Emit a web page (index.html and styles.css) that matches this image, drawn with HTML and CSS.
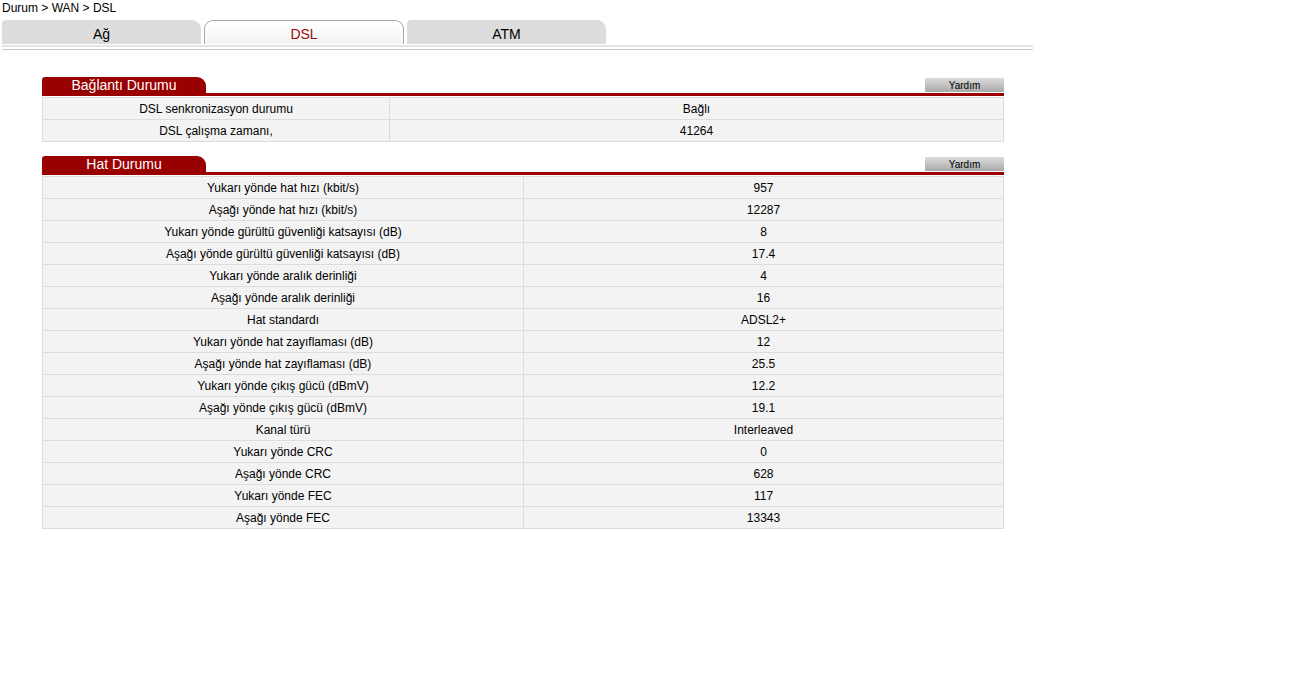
FILE: index.html
```html
<!DOCTYPE html>
<html>
<head>
<meta charset="utf-8">
<link rel="stylesheet" href="styles.css">
</head>
<body>
<div class="crumb">Durum &gt; WAN &gt; DSL</div>
<div class="tabbar">
  <div class="tab">Ağ</div>
  <div class="tab active">DSL</div>
  <div class="tab">ATM</div>
</div>
<div class="content">
  <div class="section">
    <div class="sec-head">
      <div class="sec-title">Bağlantı Durumu</div>
      <div class="help">Yardım</div>
    </div>
    <table class="grid first">
      <tr><td class="k">DSL senkronizasyon durumu</td><td>Bağlı</td></tr>
      <tr><td class="k">DSL çalışma zamanı,</td><td>41264</td></tr>
    </table>
  </div>
  <div class="section">
    <div class="sec-head">
      <div class="sec-title">Hat Durumu</div>
      <div class="help">Yardım</div>
    </div>
    <table class="grid second">
      <tr><td class="k">Yukarı yönde hat hızı (kbit/s)</td><td>957</td></tr>
      <tr><td class="k">Aşağı yönde hat hızı (kbit/s)</td><td>12287</td></tr>
      <tr><td class="k">Yukarı yönde gürültü güvenliği katsayısı (dB)</td><td>8</td></tr>
      <tr><td class="k">Aşağı yönde gürültü güvenliği katsayısı (dB)</td><td>17.4</td></tr>
      <tr><td class="k">Yukarı yönde aralık derinliği</td><td>4</td></tr>
      <tr><td class="k">Aşağı yönde aralık derinliği</td><td>16</td></tr>
      <tr><td class="k">Hat standardı</td><td>ADSL2+</td></tr>
      <tr><td class="k">Yukarı yönde hat zayıflaması (dB)</td><td>12</td></tr>
      <tr><td class="k">Aşağı yönde hat zayıflaması (dB)</td><td>25.5</td></tr>
      <tr><td class="k">Yukarı yönde çıkış gücü (dBmV)</td><td>12.2</td></tr>
      <tr><td class="k">Aşağı yönde çıkış gücü (dBmV)</td><td>19.1</td></tr>
      <tr><td class="k">Kanal türü</td><td>Interleaved</td></tr>
      <tr><td class="k">Yukarı yönde CRC</td><td>0</td></tr>
      <tr><td class="k">Aşağı yönde CRC</td><td>628</td></tr>
      <tr><td class="k">Yukarı yönde FEC</td><td>117</td></tr>
      <tr><td class="k">Aşağı yönde FEC</td><td>13343</td></tr>
    </table>
  </div>
</div>
</body>
</html>
```
FILE: styles.css
```css
html, body {
  margin: 0;
  padding: 0;
  background: #fff;
  font-family: "Liberation Sans", Arial, sans-serif;
  color: #000;
}
.crumb {
  font-size: 12px;
  line-height: 14px;
  padding-left: 2px;
  padding-top: 1px;
  height: 19px;
}
.tabbar {
  display: flex;
  gap: 3px;
  width: 1031px;
  margin-left: 2px;
  border-bottom: 2px solid #e4e4e4;
  box-shadow: 0 2px 0 #fff, 0 3px 0 #c8c8c8;
  padding-bottom: 1px;
}
.tab {
  width: 199px;
  height: 24px;
  line-height: 29px;
  text-align: center;
  font-size: 14px;
  background: #dcdcdc;
  border-radius: 4px 9px 0 0;
  box-sizing: border-box;
}
.tab.active {
  background: linear-gradient(#ffffff, #f4f4f4);
  border: 1px solid #a8a8a8;
  border-bottom: none;
  border-radius: 9px 9px 0 0;
  color: #9b0a0a;
  line-height: 27px;
  width: 200px;
}
.content {
  margin-left: 42px;
  width: 962px;
  padding-top: 30px;
}
.section {
  margin-bottom: 14px;
}
.sec-head {
  display: flex;
  justify-content: space-between;
  align-items: flex-end;
  border-bottom: 3px solid #990000;
  height: 16px;
}
.sec-title {
  width: 164px;
  height: 16px;
  background: #990000;
  color: #fff;
  font-size: 14px;
  line-height: 17px;
  text-align: center;
  border-radius: 3px 9px 0 0;
}
.help {
  width: 79px;
  height: 14px;
  margin-bottom: 1px;
  background: linear-gradient(#dcdcdc, #a9a9a9);
  font-size: 10px;
  line-height: 15px;
  text-align: center;
  color: #000;
}
.grid {
  width: 962px;
  border-collapse: collapse;
  margin-top: 1px;
}
.grid td {
  border: 1px solid #dcdcdc;
  background: #f3f3f3;
  height: 21px;
  padding: 0;
  font-size: 12px;
  text-align: center;
  line-height: 14px;
}
.grid.first td.k { width: 346px; }
.grid.second td.k { width: 480px; }
```
